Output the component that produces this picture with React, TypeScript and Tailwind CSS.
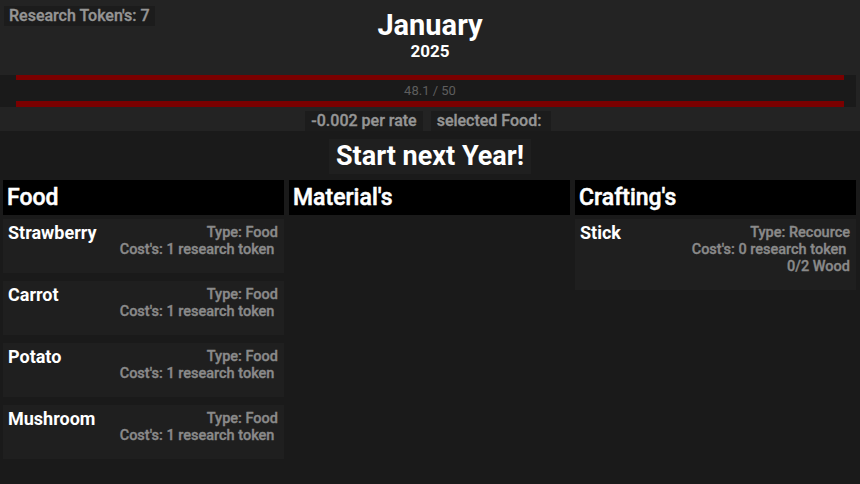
import React from "react";

type Item = { name: string; lines: string[] };

const food: Item[] = [
  { name: "Strawberry", lines: ["Type: Food", "Cost's: 1 research token "] },
  { name: "Carrot", lines: ["Type: Food", "Cost's: 1 research token "] },
  { name: "Potato", lines: ["Type: Food", "Cost's: 1 research token "] },
  { name: "Mushroom", lines: ["Type: Food", "Cost's: 1 research token "] },
];

const crafting: Item[] = [
  { name: "Stick", lines: ["Type: Recource", "Cost's: 0 research token ", "0/2 Wood"] },
];

function Card({ item }: { item: Item }) {
  return (
    <div className="flex justify-between bg-[#1f1f1f] pl-[5px] pr-[6px] pt-[3px] pb-[15px]">
      <div className="text-[18px] font-bold text-white leading-[22px]">{item.name}</div>
      <div className="flex flex-col items-end text-[14.5px] font-medium text-[#8a8a8a] leading-[17px] whitespace-pre pt-[2px] [-webkit-text-stroke:0.35px_#8a8a8a]">
        {item.lines.map((l, i) => (
          <div key={i}>{l}</div>
        ))}
      </div>
    </div>
  );
}

function Column({ title, items }: { title: string; items: Item[] }) {
  return (
    <div className="flex flex-col gap-[4px]">
      <div className="h-[35px] bg-black flex items-center px-[4px] pt-[2px] text-[23px] font-medium text-white [-webkit-text-stroke:0.5px_#ffffff]">{title}</div>
      <div className="flex flex-col gap-[8px]">
        {items.map((it) => (
          <Card key={it.name} item={it} />
        ))}
      </div>
    </div>
  );
}

export default function App() {
  return (
    <div className="w-[860px] h-[484px] bg-[#1a1a1a] overflow-hidden" style={{ fontFamily: "Roboto, 'Noto Sans', sans-serif" }}>
      <div className="bg-[#232323] h-[75px] grid grid-cols-[1fr_auto_1fr]">
        <div className="pt-[4px] pl-[4px]">
          <div className="inline-block bg-[#1c1c1c] px-[5px] h-[20px] leading-[20px] text-[16px] font-medium text-[#959595] [-webkit-text-stroke:0.35px_#959595]">Research Token's: 7</div>
        </div>
        <div className="flex flex-col items-center pt-[6px]">
          <div className="text-[29px] font-bold text-white leading-[38px]">January</div>
          <div className="text-[17px] font-bold text-white leading-[14px]">2025</div>
        </div>
        <div />
      </div>
      <div className="bg-[#232323] pr-[4px]">
        <div className="h-[32px] bg-[#1a1a1a] flex">
          <div className="w-[16px]" />
          <div className="flex-1 border-t-[5px] border-b-[6px] border-[#7a0000] flex items-center justify-center text-[13px] text-[#5e5e5e]">48.1 / 50</div>
          <div className="w-[12px]" />
        </div>
        <div className="h-[24px] flex justify-center items-end gap-[8px] pb-0">
          <div className="bg-[#1c1c1c] h-[20px] leading-[20px] px-[6px] text-[16px] font-medium text-[#959595] [-webkit-text-stroke:0.35px_#959595]">-0.002 per rate</div>
          <div className="bg-[#1c1c1c] h-[20px] leading-[20px] px-[6px] text-[16px] font-medium text-[#959595] w-[120px] [-webkit-text-stroke:0.35px_#959595]">selected Food:</div>
        </div>
      </div>
      <div className="flex justify-center pt-[8px]">
        <div className="bg-[#1f1f1f] h-[35px] px-[7px] flex items-center text-[27px] font-bold text-white">Start next Year!</div>
      </div>
      <div className="grid grid-cols-3 gap-[5px] pl-[3px] pr-[4px] pt-[6px]">
        <Column title="Food" items={food} />
        <Column title="Material's" items={[]} />
        <Column title="Crafting's" items={crafting} />
      </div>
    </div>
  );
}
